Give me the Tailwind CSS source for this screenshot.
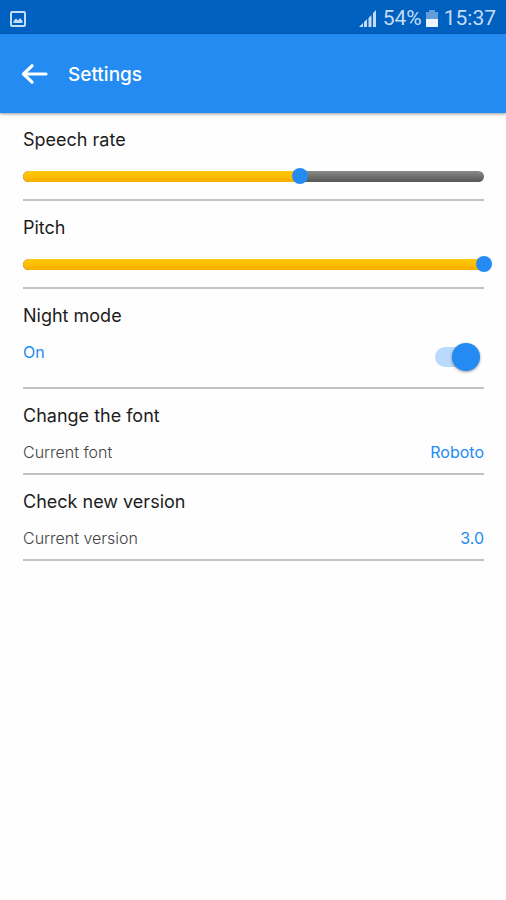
<!DOCTYPE html>
<html lang="en">
  <head>
    <meta charset="UTF-8" />
    <meta name="viewport" content="width=device-width, initial-scale=1" />
    <title>Settings</title>
    <script src="https://cdn.jsdelivr.net/npm/@tailwindcss/browser@4"></script>
  </head>
  <body class="min-h-screen bg-[#fefefe] font-['Inter',sans-serif] text-[#1c1c1c]">
    <!-- Status bar -->
    <div class="flex h-[34px] items-center justify-between bg-[#0060c0] px-[10px] pt-1 font-['Roboto',sans-serif] text-[21px] text-[#c4dcf5]">
      <svg class="h-4 w-4" viewBox="0 0 16 16" fill="none" aria-hidden="true">
        <rect x="1" y="1" width="14" height="14" rx="1" stroke="currentColor" stroke-width="2" />
        <path d="M3.500 12 V10 L6 7.500 L8 9.500 L10 7 L12.500 10 V12 Z" fill="currentColor" />
      </svg>
      <div class="flex items-center">
        <svg class="mr-[6px] h-[18px] w-[18px]" viewBox="0 0 18 18" fill="currentColor" aria-hidden="true">
          <path d="M0 17 L4 13 V17 Z M5 12 L8 9 V17 H5 Z M9.500 8 L12.500 5 V17 H9.500 Z M14 3 L17 0 V17 H14 Z" />
        </svg>
        <span>54%</span>
        <svg class="mr-[6px] ml-1 h-[18px] w-3" viewBox="0 0 12 18" fill="currentColor" aria-hidden="true">
          <path d="M3 0 H9 V2 H12 V9 H0 V2 H3 Z" opacity="0.5" />
          <path d="M0 9 H12 V17 H0 Z" fill="#ecf5fd" />
        </svg>
        <span>15:37</span>
      </div>
    </div>

    <!-- App bar -->
    <header class="flex h-[79px] items-center bg-[#238bf2] pt-px pl-[21px] text-white shadow-[0_1px_3px_rgba(0,0,0,0.4)]">
      <button type="button" aria-label="Back" class="mr-5 cursor-pointer">
        <svg class="h-5 w-[27px]" viewBox="0 0 27 20" fill="none" stroke="currentColor" stroke-width="3.2" aria-hidden="true">
          <path d="M25 10 H3 M11 1.800 L2.500 10 L11 18.200" stroke-linecap="round" stroke-linejoin="round" />
        </svg>
      </button>
      <h1 class="pt-[2px] text-[19px] font-medium">Settings</h1>
    </header>

    <main class="pr-[22px] pl-[23px]">
      <section class="border-b-2 border-[#c2c2c2] pt-[13px] pb-[13px]">
        <label for="rate" class="block text-lg leading-7">Speech rate</label>
        <div class="relative mt-3 flex h-5 items-center">
          <div class="h-[11px] w-full overflow-hidden rounded-full bg-linear-to-b from-[#8a8c8a] to-[#555755]">
            <div id="rate-fill" class="h-full rounded-l-full bg-linear-to-b from-[#ffcb0b] to-[#fbac00]" style="width: 60%"></div>
          </div>
          <input
            id="rate"
            type="range"
            min="0"
            max="100"
            value="60"
            class="absolute inset-y-0 -left-2 w-[calc(100%+16px)] cursor-pointer appearance-none bg-transparent [&::-webkit-slider-thumb]:h-4 [&::-webkit-slider-thumb]:w-4 [&::-webkit-slider-thumb]:appearance-none [&::-webkit-slider-thumb]:rounded-full [&::-webkit-slider-thumb]:bg-[#238bf2]"
          />
        </div>
      </section>

      <section class="border-b-2 border-[#c2c2c2] pt-[13px] pb-[13px]">
        <label for="pitch" class="block text-lg leading-7">Pitch</label>
        <div class="relative mt-3 flex h-5 items-center">
          <div class="h-[11px] w-full overflow-hidden rounded-full bg-linear-to-b from-[#8a8c8a] to-[#555755]">
            <div id="pitch-fill" class="h-full rounded-l-full bg-linear-to-b from-[#ffcb0b] to-[#fbac00]" style="width: 100%"></div>
          </div>
          <input
            id="pitch"
            type="range"
            min="0"
            max="100"
            value="100"
            class="absolute inset-y-0 -left-2 w-[calc(100%+16px)] cursor-pointer appearance-none bg-transparent [&::-webkit-slider-thumb]:h-4 [&::-webkit-slider-thumb]:w-4 [&::-webkit-slider-thumb]:appearance-none [&::-webkit-slider-thumb]:rounded-full [&::-webkit-slider-thumb]:bg-[#238bf2]"
          />
        </div>
      </section>

      <section class="border-b-2 border-[#c2c2c2] pt-[13px] pb-5">
        <label for="night" class="block text-lg leading-7">Night mode</label>
        <div class="mt-[10px] flex items-start justify-between">
          <span id="night-state" class="text-base text-[#238bf2]">On</span>
          <input
            id="night"
            type="checkbox"
            role="switch"
            checked
            class="mt-[7px] mr-1 flex h-5 w-[45px] cursor-pointer appearance-none items-center rounded-full bg-[#d0d0d0] before:h-7 before:w-7 before:shrink-0 before:rounded-full before:bg-white before:shadow-[0_1px_3px_rgba(0,0,0,0.4)] checked:justify-end checked:bg-[#b9dafa] checked:before:bg-[#238bf2]"
          />
        </div>
      </section>

      <section class="border-b-2 border-[#c2c2c2] pt-[13px] pb-[9px]">
        <h2 class="text-lg leading-7">Change the font</h2>
        <div class="mt-[10px] flex justify-between text-base">
          <span class="font-light text-[#444]">Current font</span>
          <a href="#" class="text-[#238bf2]">Roboto</a>
        </div>
      </section>

      <section class="border-b-2 border-[#c2c2c2] pt-[13px] pb-[9px]">
        <h2 class="text-lg leading-7">Check new version</h2>
        <div class="mt-[10px] flex justify-between text-base">
          <span class="font-light text-[#444]">Current version</span>
          <a href="#" class="text-[#238bf2]">3.0</a>
        </div>
      </section>
    </main>

    <script>
      // Keep the coloured part of each track in step with its thumb
      ["rate", "pitch"].forEach((name) => {
        const slider = document.getElementById(name);
        const fill = document.getElementById(name + "-fill");
        slider.addEventListener("input", () => {
          fill.style.width = slider.value + "%";
        });
      });

      const night = document.getElementById("night");
      night.addEventListener("change", () => {
        document.getElementById("night-state").textContent = night.checked ? "On" : "Off";
      });
    </script>
  </body>
</html>
